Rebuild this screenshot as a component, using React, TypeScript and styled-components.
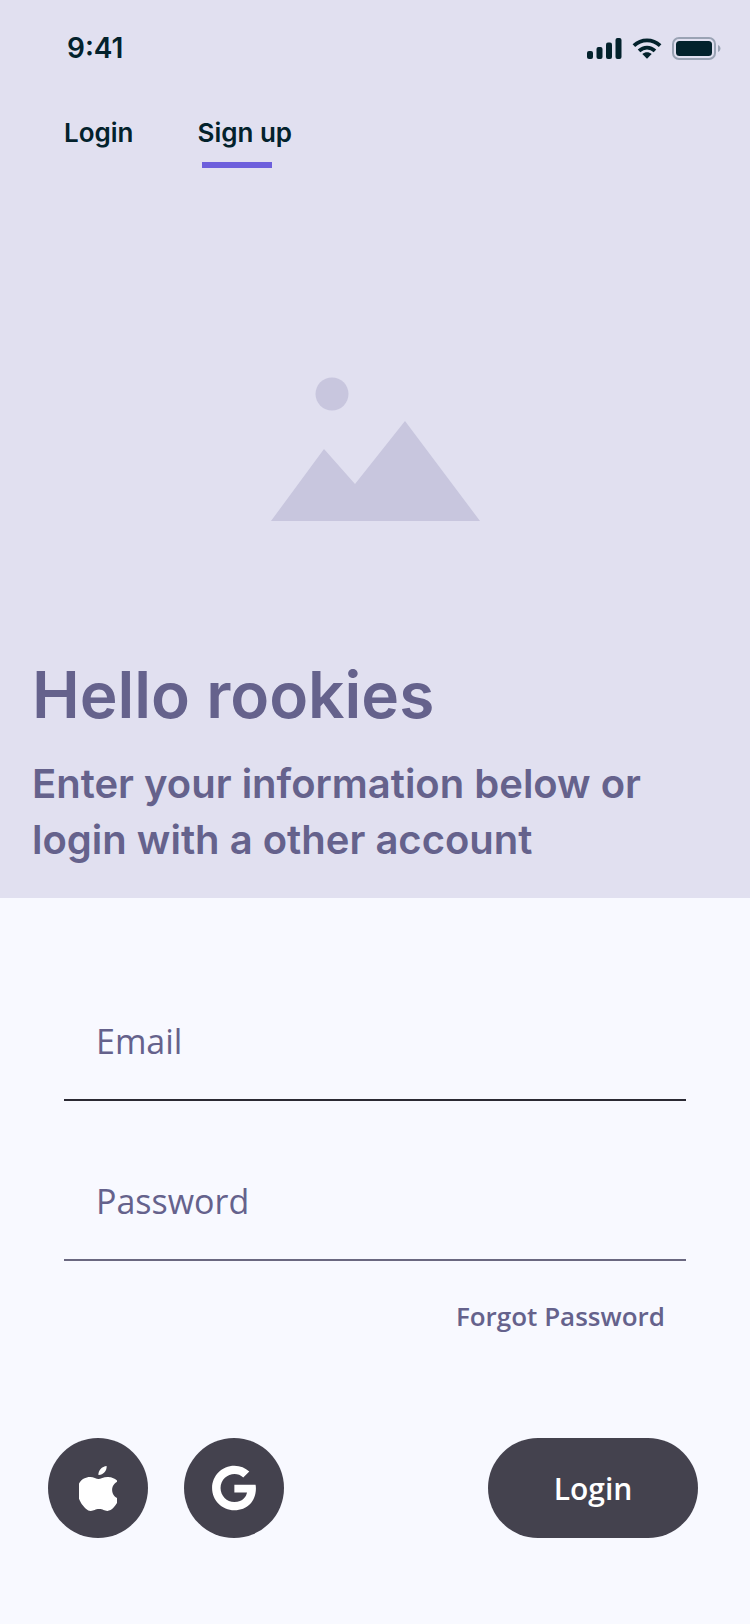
import { FC } from "react";
import styled, { createGlobalStyle } from "styled-components";
import { FaGoogle } from "react-icons/fa";

const INK = "#03222c";
const MUTED = "#65628c";
const DARK = "#44424e";

const GlobalStyle = createGlobalStyle`
  html, body {
    margin: 0;
    padding: 0;
    background: #f8f9ff;
  }
  * {
    box-sizing: border-box;
  }
`;

export default function App() {
  return (
    <>
      <GlobalStyle />
      <Page>
        <Hero>
          <StatusBar>
            <Time>9:41</Time>
            <StatusIcons>
              <SignalIcon />
              <WifiIcon />
              <BatteryIcon />
            </StatusIcons>
          </StatusBar>

          <Tabs>
            <Tab>Login</Tab>
            <Tab $active>Sign up</Tab>
          </Tabs>

          <Illustration>
            <PlaceholderImage />
          </Illustration>

          <Title>Hello rookies</Title>
          <Subtitle>
            Enter your information below or
            <br />
            login with a other account
          </Subtitle>
        </Hero>

        <FormSection>
          <Field $dark>Email</Field>
          <Field>Password</Field>
          <ForgotRow>
            <Forgot>Forgot Password</Forgot>
          </ForgotRow>

          <Actions>
            <Socials>
              <RoundButton aria-label="Apple">
                <AppleIcon />
              </RoundButton>
              <RoundButton aria-label="Google">
                <FaGoogle size={46} />
              </RoundButton>
            </Socials>
            <LoginButton>Login</LoginButton>
          </Actions>
        </FormSection>
      </Page>
    </>
  );
}

const SignalIcon: FC = () => (
  <svg width="35" height="21" viewBox="0 0 35 21" fill={INK}>
    <rect x="0" y="13" width="6" height="8" rx="2" />
    <rect x="9.5" y="9" width="6" height="12" rx="2" />
    <rect x="19" y="4.5" width="6" height="16.5" rx="2" />
    <rect x="28.5" y="0" width="6" height="21" rx="2" />
  </svg>
);

const WifiIcon: FC = () => (
  <svg width="30" height="22" viewBox="0 0 32 23" fill="none">
    <path d="M2 9 C10 1.5 22 1.5 30 9" stroke={INK} strokeWidth="4" />
    <path d="M7.5 14.5 C12.5 9.8 19.5 9.8 24.5 14.5" stroke={INK} strokeWidth="4" />
    <path d="M11 18 C14 15.3 18 15.3 21 18 L16 23 Z" fill={INK} />
  </svg>
);

const BatteryIcon: FC = () => (
  <svg width="49" height="23" viewBox="0 0 49 23">
    <rect
      x="1"
      y="1"
      width="42"
      height="21"
      rx="6"
      fill="none"
      stroke="#9aa3b4"
      strokeWidth="2"
    />
    <rect x="4" y="4" width="36" height="15" rx="3.5" fill={INK} />
    <path d="M46 8 C48 9 48.5 10.5 48.5 11.5 C48.5 12.5 48 14 46 15 Z" fill="#9aa3b4" />
  </svg>
);

// body and leaf are scaled apart, the leaf is small in the reference
const AppleIcon: FC = () => (
  <svg width="38" height="45" viewBox="0 0 38 45" fill="currentColor">
    <path
      transform="translate(-6.4 0.08) scale(2.13 1.87)"
      d="M12.152 6.896c-.948 0-2.415-1.078-3.96-1.04-2.04.027-3.91 1.183-4.961 3.014-2.117 3.675-.546 9.103 1.519 12.09 1.013 1.454 2.208 3.09 3.792 3.039 1.52-.065 2.09-.987 3.935-.987 1.831 0 2.35.987 3.96.948 1.637-.026 2.676-1.48 3.676-2.948 1.156-1.688 1.636-3.325 1.662-3.415-.039-.013-3.182-1.221-3.22-4.857-.026-3.04 2.48-4.494 2.597-4.559-1.429-2.09-3.623-2.324-4.39-2.376-2-.156-3.675 1.09-4.61 1.09z"
    />
    <path
      transform="translate(-0.9 0) scale(1.7 1.64)"
      d="M15.53 3.83c.843-1.012 1.4-2.427 1.245-3.83-1.207.052-2.662.805-3.532 1.818-.78.896-1.454 2.338-1.273 3.714 1.338.104 2.715-.688 3.559-1.701"
    />
  </svg>
);

const PlaceholderImage: FC = () => (
  <svg width="211" height="161" viewBox="0 0 211 161" fill="#c8c6de">
    <circle cx="62" cy="34" r="16.5" />
    <path d="M1 161 L54 89 L85 124 L135 61 L210 161 Z" />
  </svg>
);

const Page = styled.div`
  width: 750px;
  height: 1624px;
  display: flex;
  flex-direction: column;
  background: #f8f9ff;
  overflow: hidden;
`;

const Hero = styled.section`
  height: 898px;
  flex: none;
  display: flex;
  flex-direction: column;
  background: #e1e0f0;
`;

const StatusBar = styled.div`
  display: flex;
  justify-content: space-between;
  align-items: center;
  height: 34px;
  margin-top: 31px;
  padding: 0 29px 0 67px;
`;

const Time = styled.span`
  font-family: Inter, sans-serif;
  font-size: 28px;
  font-weight: 600;
  color: ${INK};
`;

const StatusIcons = styled.div`
  display: flex;
  align-items: center;
  gap: 10px;
`;

const Tabs = styled.nav`
  display: flex;
  gap: 64px;
  margin-top: 50px;
  padding-left: 64px;
`;

const Tab = styled.div<{ $active?: boolean }>`
  position: relative;
  height: 36px;
  font-family: Inter, sans-serif;
  font-size: 26px;
  line-height: 36px;
  font-weight: 600;
  color: ${INK};

  &::after {
    content: "";
    display: ${({ $active }) => ($active ? "block" : "none")};
    position: absolute;
    left: 4px;
    top: 47px;
    width: 70px;
    height: 6px;
    background: #6d5fdc;
  }
`;

const Illustration = styled.div`
  display: flex;
  justify-content: flex-start;
  margin-top: 209px;
  padding-left: 270px;
  height: 161px;
`;

const Title = styled.h1`
  margin: 134px 0 0;
  padding-left: 32px;
  font-family: Inter, sans-serif;
  font-size: 64px;
  line-height: 80px;
  font-weight: 600;
  color: ${MUTED};
`;

const Subtitle = styled.p`
  margin: 21px 0 0;
  padding-left: 32px;
  font-family: Inter, sans-serif;
  font-size: 40px;
  line-height: 56px;
  font-weight: 600;
  color: ${MUTED};
`;

const FormSection = styled.section`
  flex: 1;
  display: flex;
  flex-direction: column;
  padding-top: 120px;
`;

const Field = styled.div<{ $dark?: boolean }>`
  width: 622px;
  height: 83px;
  margin-left: 64px;
  padding-left: 32px;
  font-family: "Open Sans", sans-serif;
  font-size: 34px;
  line-height: 47px;
  color: ${MUTED};
  border-bottom: 2px solid ${({ $dark }) => ($dark ? "#2b2a33" : "#6a6880")};

  & + & {
    margin-top: 77px;
  }
`;

const ForgotRow = styled.div`
  display: flex;
  justify-content: flex-end;
  margin-top: 37px;
  padding-right: 85px;
`;

const Forgot = styled.span`
  font-family: "Open Sans", sans-serif;
  font-size: 26px;
  line-height: 36px;
  font-weight: 600;
  color: ${MUTED};
`;

const Actions = styled.div`
  display: flex;
  justify-content: space-between;
  margin-top: 104px;
  padding: 0 52px 0 48px;
`;

const Socials = styled.div`
  display: flex;
  gap: 36px;
`;

const RoundButton = styled.button`
  display: flex;
  align-items: center;
  justify-content: center;
  width: 100px;
  height: 100px;
  padding: 0;
  border: 0;
  border-radius: 50%;
  background: ${DARK};
  color: #ffffff;
`;

const LoginButton = styled.button`
  width: 210px;
  height: 100px;
  padding: 0;
  border: 0;
  border-radius: 50px;
  background: ${DARK};
  color: #ffffff;
  font-family: "Open Sans", sans-serif;
  font-size: 30px;
  font-weight: 600;
`;
